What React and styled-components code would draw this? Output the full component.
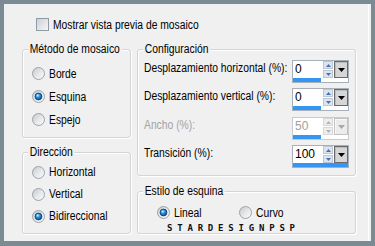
import React, { useId } from "react";
import styled, { createGlobalStyle, css } from "styled-components";

const GlobalStyle = createGlobalStyle`
  html, body { margin: 0; padding: 0; background: #7a8b94; }
  body {
    font-family: "Liberation Sans", Arial, sans-serif;
    font-size: 12px;
    color: #000;
  }
`;

const narrow = css`
  display: inline-block;
  transform: scaleX(0.86);
  transform-origin: 0 50%;
  white-space: nowrap;
`;

const Frame = styled.div`
  width: 375px;
  height: 246px;
  box-sizing: border-box;
  padding: 4px 4px 5px 4px;
  background: #7a8b94;
`;

const Panel = styled.div`
  height: 100%;
  box-sizing: border-box;
  background: #f0f0f0;
  padding: 14px 0 0 18px;
  box-shadow: inset -2px 0 0 #f0f0f0, inset -3px 0 0 #ffffff;
`;

const CheckRow = styled.label`
  display: flex;
  align-items: center;
  gap: 4px;
  margin-left: 14px;
  height: 13px;
  line-height: 14px;
`;

const Text = styled.span`
  ${narrow}
  color: ${(p) => (p.$disabled ? "#a3a3a3" : "#000")};
`;

const CheckBox = styled.span`
  width: 13px;
  height: 13px;
  box-sizing: border-box;
  border: 1px solid #8f9ba4;
  background: linear-gradient(135deg, #cdd0d3 0%, #e6e7e8 60%, #f6f6f6 100%);
  flex: none;
`;

const Columns = styled.div`
  display: flex;
  gap: 6px;
  margin-top: 18px;
`;

const Column = styled.div`
  display: flex;
  flex-direction: column;
  width: ${(p) => p.$w}px;
  gap: ${(p) => p.$gap}px;
`;

const Group = styled.div`
  position: relative;
  box-sizing: border-box;
  height: ${(p) => p.$h}px;
  border: 1px solid #d2d4d6;
  border-radius: 3px;
  box-shadow: inset 1px 1px 0 #ffffff, 1px 1px 0 #ffffff;
  padding: ${(p) => p.$pad};
  display: flex;
  flex-direction: column;
`;

const Legend = styled.span`
  ${narrow}
  position: absolute;
  top: -8px;
  left: 5px;
  padding: 0 2px;
  background: #f0f0f0;
  line-height: 14px;
`;

const RadioRow = styled.label`
  display: flex;
  align-items: center;
  gap: 4px;
  height: ${(p) => p.$h}px;
  line-height: 14px;
  width: ${(p) => (p.$w ? `${p.$w}px` : "auto")};
  flex: none;
`;

const InlineRadios = styled.div`
  display: flex;
  align-items: center;
`;

const Watermark = styled.div`
  margin-top: 5px;
  margin-left: 10px;
  font-family: "DejaVu Sans Mono", "Liberation Mono", monospace;
  font-weight: bold;
  font-size: 9px;
  line-height: 7px;
  letter-spacing: 4.8px;
  color: #111;
  white-space: nowrap;
`;

const FieldRow = styled.div`
  display: flex;
  justify-content: space-between;
  align-items: flex-start;
  height: ${(p) => p.$h}px;
  flex: none;
`;

const FieldLabel = styled.span`
  ${narrow}
  flex: 1;
  min-width: 0;
  line-height: 14px;
  padding-top: 1px;
  color: ${(p) => (p.$disabled ? "#a3a3a3" : "#000")};
`;

const NumBox = styled.div`
  flex: none;
  width: 57px;
  height: 23px;
  box-sizing: border-box;
  border: 1px solid ${(p) => (p.$disabled ? "#c6cbd0" : "#a7b0b8")};
  background: #fff;
  display: flex;
  flex-direction: column;
`;

const NumTop = styled.div`
  display: flex;
  height: 17px;
`;

const NumValue = styled.span`
  flex: 1;
  padding-left: 2px;
  line-height: 16px;
  color: ${(p) => (p.$disabled ? "#a0a0a0" : "#000")};
`;

const Spinner = styled.div`
  width: 10px;
  display: flex;
  flex-direction: column;
  gap: 1px;
`;

const SpinHalf = styled.div`
  flex: 1;
  box-sizing: border-box;
  border: 1px solid ${(p) => (p.$disabled ? "#d6d8da" : "#bac7d6")};
  background: ${(p) => (p.$disabled ? "#eeeeee" : "#dbe4ef")};
  display: flex;
  align-items: center;
  justify-content: center;
`;

const DropBtn = styled.div`
  width: 14px;
  margin-left: 1px;
  box-sizing: border-box;
  border: 1px solid ${(p) => (p.$disabled ? "#c2c2c2" : "#6a6a6a")};
  background: ${(p) => (p.$disabled ? "#ececec" : "#d6d6d6")};
  box-shadow: inset 1px 1px 0 ${(p) => (p.$disabled ? "#f8f8f8" : "#bdbdbd")};
  display: flex;
  align-items: center;
  justify-content: center;
`;

const Bar = styled.div`
  height: 4px;
  background: #3595f2;
`;

function Radio({ checked }) {
  const id = useId().replace(/:/g, "");
  return (
    <svg width="13" height="13" viewBox="0 0 13 13" style={{ flex: "none" }}>
      <defs>
        <linearGradient id={`f${id}`} x1="0" y1="0" x2="1" y2="1">
          <stop offset="0" stopColor="#c4c7ca" />
          <stop offset="0.55" stopColor="#e8e9ea" />
          <stop offset="1" stopColor="#fbfbfb" />
        </linearGradient>
        <radialGradient id={`b${id}`} cx="0.4" cy="0.35" r="0.7">
          <stop offset="0" stopColor="#7fd0ff" />
          <stop offset="0.5" stopColor="#1e86d6" />
          <stop offset="1" stopColor="#0b4f93" />
        </radialGradient>
      </defs>
      <circle cx="6.5" cy="6.5" r="6" fill={`url(#f${id})`} stroke="#9aa4ac" strokeWidth="1" />
      {checked && (
        <>
          <circle cx="6.5" cy="6.5" r="3.4" fill={`url(#b${id})`} stroke="#17406c" strokeWidth="0.9" />
          <circle cx="5.6" cy="5.5" r="1" fill="#d8f2ff" opacity="0.8" />
        </>
      )}
    </svg>
  );
}

function Tri({ up, color, w = 5, h = 3 }) {
  return (
    <svg width={w} height={h} viewBox={`0 0 ${w} ${h}`}>
      <polygon
        points={up ? `0,${h} ${w},${h} ${w / 2},0` : `0,0 ${w},0 ${w / 2},${h}`}
        fill={color}
      />
    </svg>
  );
}

function NumField({ value, bar, disabled }) {
  const arrow = disabled ? "#b4b4b4" : "#4a70ae";
  return (
    <NumBox $disabled={disabled}>
      <NumTop>
        <NumValue $disabled={disabled}>{value}</NumValue>
        <Spinner>
          <SpinHalf $disabled={disabled}>
            <Tri up color={arrow} />
          </SpinHalf>
          <SpinHalf $disabled={disabled}>
            <Tri color={arrow} />
          </SpinHalf>
        </Spinner>
        <DropBtn $disabled={disabled}>
          <Tri color={disabled ? "#a8a8a8" : "#000"} w={7} h={4} />
        </DropBtn>
      </NumTop>
      <Bar style={{ width: `${bar}px` }} />
    </NumBox>
  );
}

const fields = [
  { label: "Desplazamiento horizontal (%):", value: "0", bar: 28, h: 28 },
  { label: "Desplazamiento vertical (%):", value: "0", bar: 28, h: 29 },
  { label: "Ancho (%):", value: "50", bar: 28, h: 28, disabled: true },
  { label: "Transición (%):", value: "100", bar: 55, h: 28 },
];

export default function App() {
  return (
    <>
      <GlobalStyle />
      <Frame>
        <Panel>
          <CheckRow>
            <CheckBox />
            <Text>Mostrar vista previa de mosaico</Text>
          </CheckRow>
          <Columns>
            <Column $w={109} $gap={14}>
              <Group $h={89} $pad="12px 0 0 9px">
                <Legend>Método de mosaico</Legend>
                <RadioRow $h={23}><Radio /><Text>Borde</Text></RadioRow>
                <RadioRow $h={23}><Radio checked /><Text>Esquina</Text></RadioRow>
                <RadioRow $h={23}><Radio /><Text>Espejo</Text></RadioRow>
              </Group>
              <Group $h={82} $pad="8px 0 0 9px">
                <Legend>Dirección</Legend>
                <RadioRow $h={22}><Radio /><Text>Horizontal</Text></RadioRow>
                <RadioRow $h={22}><Radio /><Text>Vertical</Text></RadioRow>
                <RadioRow $h={22}><Radio checked /><Text>Bidireccional</Text></RadioRow>
              </Group>
            </Column>
            <Column $w={219} $gap={15}>
              <Group $h={127} $pad="10px 6px 0 6px">
                <Legend>Configuración</Legend>
                {fields.map((f) => (
                  <FieldRow key={f.label} $h={f.h}>
                    <FieldLabel $disabled={f.disabled}>{f.label}</FieldLabel>
                    <NumField value={f.value} bar={f.bar} disabled={f.disabled} />
                  </FieldRow>
                ))}
              </Group>
              <Group $h={43} $pad="13px 0 0 19px">
                <Legend>Estilo de esquina</Legend>
                <InlineRadios>
                  <RadioRow $h={15} $w={82}><Radio checked /><Text>Lineal</Text></RadioRow>
                  <RadioRow $h={15}><Radio /><Text>Curvo</Text></RadioRow>
                </InlineRadios>
                <Watermark>STARDESIGNPSP</Watermark>
              </Group>
            </Column>
          </Columns>
        </Panel>
      </Frame>
    </>
  );
}
